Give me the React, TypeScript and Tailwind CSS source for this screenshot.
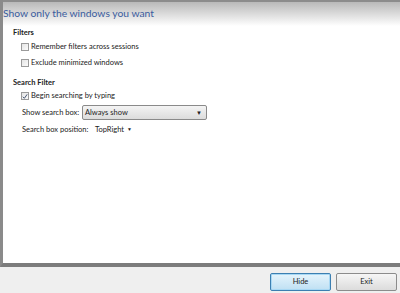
import React from 'react';

const Check = ({ checked }: { checked?: boolean }) => (
  <span className="w-[8px] h-[8px] border border-[#9a9a9a] bg-gradient-to-br from-[#e4e4e4] to-[#fbfbfb] flex items-center justify-center shrink-0">
    {checked && (
      <svg width="7" height="7" viewBox="0 0 7 7">
        <path d="M1 3.8 L2.8 5.6 L6 1" stroke="#3a4a6a" strokeWidth="1.1" fill="none" />
      </svg>
    )}
  </span>
);

const App = () => {
  return (
    <div className="w-[400px] h-[293px] flex flex-col bg-[#efefef] overflow-hidden" style={{ fontFamily: '"Lato", "Noto Sans", sans-serif' }}>
      <div className="flex-1 flex flex-col bg-white border-l-[3px] border-[#8a8a8a] border-b-[4px] border-b-[#7c7c7c]">
        <div className="h-[26px] border-t-[2px] border-[#8c8c8c] bg-gradient-to-b from-[#b9b9b9] to-white pt-[6px] leading-none">
          <div className="text-[10.3px] text-[#3a5c9e] leading-none">Show only the windows you want</div>
        </div>
        <div className="pl-[10px] pt-[3px] text-[7.5px] text-[#222] leading-none">
          <div className="font-bold">Filters</div>
          <div className="pl-[8px] mt-[6px] flex flex-col gap-[8px]">
            <label className="flex items-center gap-[2px]"><Check /><span>Remember filters across sessions</span></label>
            <label className="flex items-center gap-[2px]"><Check /><span>Exclude minimized windows</span></label>
          </div>
          <div className="font-bold mt-[12px]">Search Filter</div>
          <div className="pl-[8px] mt-[6px] flex flex-col">
            <label className="flex items-center gap-[2px]"><Check checked /><span>Begin searching by typing</span></label>
            <div className="flex items-center mt-[5px] pl-[1px]">
              <span className="w-[60px]">Show search box:</span>
              <div className="w-[125px] h-[15px] border border-[#8a8a8a] rounded-[2px] bg-gradient-to-b from-[#f4f4f4] to-[#dcdcdc] flex items-center justify-between px-[2px]">
                <span>Always show</span>
                <span className="text-[6px] pr-[2px]">▼</span>
              </div>
            </div>
            <div className="flex items-center mt-[6px] pl-[1px]">
              <span className="w-[73px]">Search box position:</span>
              <span>TopRight</span>
              <span className="text-[5px] ml-[3px]">▼</span>
            </div>
          </div>
        </div>
      </div>
      <div className="h-[26px] flex items-center justify-end gap-[5px] pr-[3px] pt-[3px] text-[7.5px] text-[#222]">
        <button className="w-[61px] h-[18px] border border-[#3c7fb1] rounded-[2px] bg-gradient-to-b from-[#e5f4fc] to-[#bfe0f3] shadow-[inset_0_0_0_1px_#a8d8f4]">Hide</button>
        <button className="w-[61px] h-[18px] border border-[#8c8c8c] rounded-[2px] bg-gradient-to-b from-[#f6f6f6] to-[#dcdcdc]">Exit</button>
      </div>
    </div>
  );
};

export default App;
